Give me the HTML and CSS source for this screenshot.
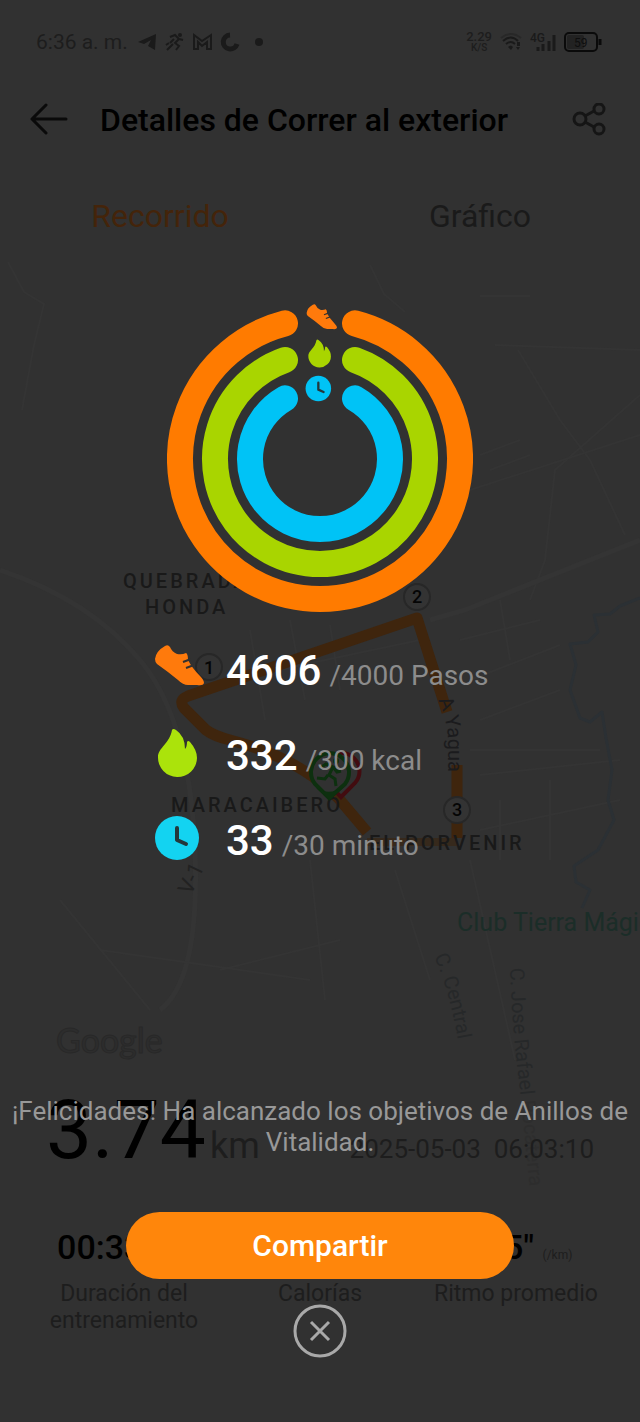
FILE: index.html
```html
<!DOCTYPE html>
<html lang="es">
<head>
    <meta charset="UTF-8">
    <meta name="viewport" content="width=device-width, initial-scale=1.0">
    <title>Detalles de Correr al exterior</title>
    <link rel="stylesheet" href="styles.css">
</head>
<body>
    <div class="screen">
        <!-- Status bar -->
        <div class="status-bar">
            <span class="status-time">6:36 a. m.</span>
            <svg class="status-apps" width="130" height="22" viewBox="0 0 130 22">
                <path class="fill" d="M2 11 L20 3 L19 19 L12 15 L15 9 L8 13 Z"/>
                <g class="line">
                    <circle cx="44" cy="4" r="1"/>
                    <path d="M34 6 L39 4 L43 8 L39 12 L43 15 L40 19 M43 8 L47 9 M38 8 L34 12 M37 13 L31 19 M33 12 L30 14"/>
                    <path d="M58 18 V4 L66 10 L75 4 V18 H71 V11 L66 15 L62 11 V18 Z"/>
                </g>
                <path class="thick" d="M94 4 A7 7 0 1 0 101 13"/>
                <circle class="fill" cx="123" cy="11" r="4"/>
            </svg>
            <div class="status-right">
                <span class="net-speed"><b>2.29</b><small>K/S</small></span>
                <svg width="22" height="20" viewBox="0 0 22 20">
                    <path class="line faint" d="M1 6 Q11 -2 21 6"/>
                    <path class="line" d="M3 9 Q11 2 18 9 M6 12 Q11 8 15 12"/>
                    <path class="fill" d="M8 15 Q11 12 13 15 L11 18 Z M17 10 h3 v4 h-3 Z M16 15 h4 l-2 3 Z"/>
                </svg>
                <svg width="26" height="22" viewBox="0 0 26 22">
                    <text class="net-type" x="0" y="11">4G</text>
                    <path class="bars" d="M8 20 V16 M13 20 V13 M19 20 V10 M24 20 V4"/>
                </svg>
                <svg width="38" height="20" viewBox="0 0 38 20">
                    <rect class="battery" x="1" y="1" width="32" height="18" rx="4"/>
                    <rect class="battery-level" x="3" y="3" width="17" height="14" rx="2"/>
                    <path class="battery-cap" d="M36 7 V13"/>
                    <text class="battery-text" x="10" y="15">59</text>
                </svg>
            </div>
        </div>

        <!-- Header -->
        <div class="header">
            <button class="icon-button" aria-label="Atrás">
                <svg width="38" height="34" viewBox="0 0 38 34">
                    <path class="back" d="M36 16 H2 M16 2 L2 16 L16 30"/>
                </svg>
            </button>
            <h1 class="title">Detalles de Correr al exterior</h1>
            <button class="icon-button" aria-label="Compartir ruta">
                <svg width="34" height="34" viewBox="0 0 34 34">
                    <g class="share">
                        <circle cx="8" cy="16" r="6"/>
                        <circle cx="27" cy="6" r="5"/>
                        <circle cx="27" cy="26" r="5"/>
                        <path d="M13 13 L22 8 M13 19 L22 24"/>
                    </g>
                </svg>
            </button>
        </div>
        <div class="tabs">
            <button class="tab active">Recorrido</button>
            <button class="tab">Gráfico</button>
        </div>

        <!-- Route map -->
        <svg class="map" viewBox="0 262 640 814">
            <rect class="map-bg" x="0" y="262" width="640" height="814"/>
            <g class="roads">
                <path d="M8 262 L24 292 L44 304 L34 345 L22 410"/>
                <path d="M370 265 L384 294 L405 312 M480 296 H530 M495 345 L640 350"/>
                <path d="M518 350 L560 420 L590 460 L625 535 M640 395 L555 470 L545 560 L530 600"/>
                <path d="M470 490 L640 435 M480 455 L520 440 M490 470 L530 455"/>
                <path d="M430 620 L465 610 L640 540" class="wide"/>
                <path d="M0 570 Q90 600 140 660 T195 850 T160 1010" class="wide"/>
                <path d="M250 630 L265 720 M290 620 L305 700 M330 625 L340 690 M230 680 L420 640"/>
                <path d="M460 640 L540 620 M470 680 L560 645 M480 720 L560 690 M470 750 H600 M480 775 L620 760 M500 600 L510 660"/>
                <path d="M480 830 L620 800 M395 870 L430 980 M470 860 L515 1060 M500 800 V860 M550 780 V860"/>
                <path d="M60 900 L150 1010 M100 950 L310 980 M220 970 L340 940 M310 860 L325 1000"/>
            </g>
            <path class="river" d="M640 598 L620 606 L610 614 L594 615 L598 632 L588 642 L570 644 L576 665 L570 690 L580 718 L590 722 L602 712 L606 738 L612 770 L608 800 L614 820 L598 850 L574 866 L576 882 L590 890 L582 908"/>

            <path class="route" d="M457 838 V765 M447 712 L432 665 L417 618 L188 696 Q178 700 184 708 L206 730 Q214 736 230 740 Q300 758 340 800 L367 832"/>
            <path class="route end" d="M367 842 H457"/>

            <g class="place">
                <text x="123" y="588">QUEBRADA</text>
                <text x="145" y="614">HONDA</text>
                <text x="171" y="812">MARACAIBERO</text>
                <text x="369" y="850">EL PORVENIR</text>
            </g>
            <text class="club" x="457" y="931">Club Tierra Mágica</text>

            <g class="street">
                <path id="yagua" d="M438 700 Q448 720 448 745 V785"/>
                <path id="central" d="M434 957 Q448 985 458 1040"/>
                <path id="rafael" d="M510 968 Q512 1030 520 1090 L530 1190"/>
                <text class="dark"><textPath href="#yagua">A Yagua</textPath></text>
                <text><textPath href="#central">C. Central</textPath></text>
                <text><textPath href="#rafael">C. Jose Rafael <tspan class="fade">Pocaterra</tspan></textPath></text>
                <text class="road-number" transform="translate(191 896) rotate(-65)">V-1</text>
            </g>

            <g class="marker">
                <circle cx="209" cy="667" r="13"/>
                <circle cx="417" cy="597" r="13"/>
                <circle cx="457" cy="810" r="13"/>
                <text x="209" y="674">1</text>
                <text x="417" y="603">2</text>
                <text x="457" y="816">3</text>
            </g>

            <path class="pin red" d="M341 797 L355 783 A18 18 0 1 0 328 783 Z"/>
            <path class="pin green" d="M329 798 L345 784 A19 19 0 1 0 315 784 Z"/>
            <path class="pin-tip" d="M316 788 Q329 796 344 787 L330 800 Z"/>
            <path class="runner" d="M320 768 L326 764 L333 767 L329 775 L335 779 L336 786 M333 767 L337 772 L341 771 M328 775 L325 779 L317 778"/>
            <circle class="runner-head" cx="336" cy="761" r="3"/>

            <text class="google" x="56" y="1053">Google</text>
        </svg>

        <!-- Workout summary -->
        <div class="summary">
            <div class="distance"><span class="distance-value">3.74</span><span class="unit">km</span></div>
            <div class="date">2025-05-03&nbsp; 06:03:10</div>
        </div>
        <div class="stats">
            <div class="stat">
                <div class="stat-value">00:33:21</div>
                <div class="stat-label">Duración del entrenamiento</div>
            </div>
            <div class="stat">
                <div class="stat-value">332</div>
                <div class="stat-label">Calorías</div>
            </div>
            <div class="stat">
                <div class="stat-value">8'55" <small>(/km)</small></div>
                <div class="stat-label">Ritmo promedio</div>
            </div>
        </div>

        <!-- Goal popup -->
        <div class="overlay">
            <svg class="rings" width="306" height="310" viewBox="0 -4 306 310">
                <path class="ring steps" d="M188 17.4 A140 140 0 1 1 118 17.4"/>
                <path class="ring calories" d="M188 54 A105 105 0 1 1 118 54"/>
                <path class="ring minutes" d="M188 92.4 A70 70 0 1 1 118 92.4"/>
                <svg class="ring-steps" x="139" y="-3" width="31" height="31" viewBox="0 0 50 50"><use href="#shoe"/></svg>
                <svg class="ring-calories" x="139" y="33" width="29" height="29" viewBox="0 0 50 50"><use href="#flame"/></svg>
                <svg class="ring-minutes" x="138" y="68" width="29" height="29" viewBox="0 0 50 50"><use href="#clock"/></svg>
            </svg>
            <ul class="goals">
                <li class="goal">
                    <svg class="icon-steps" width="50" height="50" viewBox="0 0 50 50">
                        <g id="shoe">
                            <path fill="currentColor" d="M1 16 Q2 8 11 3 Q14 1 16 4 Q18 9 23 11 Q28 12 32 10 Q34 11 34 17 Q38 25 46 33 Q50 37 50 40 Q49 43 43 42 H34 Q29 42 24 37 Q13 28 3 21 Q1 19 1 16 Z"/>
                            <path class="lace" d="M37 16 L29 19 M40 22 L32 25"/>
                        </g>
                    </svg>
                    <strong>4606</strong> <span>/4000 Pasos</span>
                </li>
                <li class="goal">
                    <svg class="icon-calories" width="50" height="50" viewBox="0 0 50 50">
                        <g id="flame">
                            <path fill="currentColor" d="M18 2 Q19 0 22 2 Q31 8 31 21 Q33 19 33 14 Q34 12 36 14 Q43 22 43 30 A19 19 0 0 1 4 29 C4 20 16 15 18 2 Z"/>
                        </g>
                    </svg>
                    <strong>332</strong> <span>/300 kcal</span>
                </li>
                <li class="goal">
                    <svg class="icon-minutes" width="50" height="50" viewBox="0 0 50 50">
                        <g id="clock">
                            <circle cx="23" cy="25" r="22" fill="currentColor"/>
                            <path class="hands" d="M23 15 V27 L32 31"/>
                        </g>
                    </svg>
                    <strong>33</strong> <span>/30 minuto</span>
                </li>
            </ul>
            <p class="message">¡Felicidades! Ha alcanzado los objetivos de Anillos de Vitalidad.</p>
            <button class="share-button">Compartir</button>
            <button class="close-button" aria-label="Cerrar">
                <svg width="54" height="54" viewBox="0 0 54 54">
                    <circle cx="27" cy="27" r="25"/>
                    <path d="M18 18 L36 36 M36 18 L18 36"/>
                </svg>
            </button>
        </div>
    </div>
</body>
</html>
```
FILE: styles.css
```css
* {
    box-sizing: border-box;
}
body {
    font-family: Roboto, "Liberation Sans", sans-serif;
    background-color: #313131;
    color: #1d1d1d;
    margin: 0;
}
button {
    font-family: inherit;
    background: none;
    border: none;
    padding: 0;
    cursor: pointer;
}
svg {
    display: block;
}
.screen {
    position: relative;
    min-height: 100vh;
    overflow: hidden;
}

/* Status bar */
.status-bar {
    display: flex;
    align-items: center;
    height: 84px;
    padding: 0 38px 0 36px;
    font-size: 21px;
}
.status-apps {
    margin-left: 8px;
}
.status-bar .fill {
    fill: #1a1a1a;
}
.status-bar .line {
    fill: none;
    stroke: #1a1a1a;
    stroke-width: 2;
}
.status-bar .faint {
    stroke: #282828;
}
.status-bar .thick {
    fill: none;
    stroke: #1a1a1a;
    stroke-width: 5;
}
.status-right {
    display: flex;
    align-items: center;
    gap: 8px;
    margin-left: auto;
}
.net-speed {
    display: flex;
    flex-direction: column;
    align-items: center;
    line-height: 11px;
}
.net-speed b {
    font-size: 13px;
    font-weight: 500;
}
.net-speed small {
    font-size: 10px;
    font-weight: 500;
}
.net-type {
    font-size: 12px;
    font-weight: 500;
    fill: #1a1a1a;
}
.bars {
    fill: none;
    stroke: #1a1a1a;
    stroke-width: 3;
}
.battery {
    fill: none;
    stroke: #0a0a0a;
    stroke-width: 2;
}
.battery-level {
    fill: #222;
}
.battery-cap {
    stroke: #0a0a0a;
    stroke-width: 3;
}
.battery-text {
    font-size: 12px;
    fill: #0e0e0e;
}

/* Header */
.header {
    display: flex;
    align-items: center;
    height: 72px;
    padding: 0 34px 0 30px;
}
.title {
    flex: 1;
    margin: 0 0 0 32px;
    font-size: 32px;
    font-weight: 500;
    color: #000;
}
.back {
    fill: none;
    stroke: #0a0a0a;
    stroke-width: 3;
    stroke-linecap: round;
    stroke-linejoin: round;
}
.share {
    fill: none;
    stroke: #151515;
    stroke-width: 3;
}
.tabs {
    display: flex;
    padding: 42px 0 28px;
}
.tab {
    flex: 1;
    font-size: 32px;
    line-height: 36px;
    color: #1a1a1a;
}
.tab.active {
    color: #44240a;
}

/* Map */
.map {
    width: 100%;
    height: auto;
    overflow: visible;
}
.map-bg {
    fill: #313131;
}
.roads path {
    fill: none;
    stroke: #343434;
    stroke-width: 2;
}
.roads .wide {
    stroke-width: 5;
}
.river {
    fill: none;
    stroke: #2b3034;
    stroke-width: 3;
    stroke-linejoin: round;
}
.route {
    fill: none;
    stroke: #3f250d;
    stroke-width: 11;
    stroke-linejoin: round;
}
.route.end {
    stroke: #36291c;
    stroke-width: 8;
}
.place text {
    font-size: 20px;
    font-weight: 500;
    letter-spacing: 3px;
    fill: #191919;
}
.club {
    font-size: 25px;
    fill: #1b2d28;
}
.street text {
    font-size: 20px;
    fill: #262829;
}
.street .dark {
    fill: #1b1b1d;
}
.street .road-number {
    font-size: 22px;
    fill: #222;
}
.street .fade {
    fill: #2d2d2d;
}
.street path {
    fill: none;
}
.marker circle {
    fill: #333;
    stroke: #272727;
    stroke-width: 2;
}
.marker text {
    font-size: 18px;
    font-weight: 500;
    text-anchor: middle;
    fill: #050505;
}
.pin {
    fill: #313131;
    stroke-width: 4;
}
.pin.red {
    stroke: #420c10;
}
.pin.green {
    stroke: #0d300f;
}
.pin-tip,
.runner-head {
    fill: #0d300f;
}
.runner {
    fill: none;
    stroke: #0d300f;
    stroke-width: 3;
}
.google {
    font-family: Lato, sans-serif;
    font-size: 34px;
    fill: #2d2d2d;
    stroke: #282828;
    stroke-width: 1;
}

/* Summary */
.summary {
    display: flex;
    justify-content: space-between;
    align-items: baseline;
    height: 96px;
    padding: 12px 46px 0;
}
.distance {
    font-size: 36px;
    line-height: 84px;
}
.distance-value {
    font-size: 82px;
    color: #000;
}
.unit {
    margin-left: 4px;
}
.date {
    font-size: 26px;
}
.stats {
    display: grid;
    grid-template-columns: repeat(3, 1fr);
    padding: 53px 26px 0;
    text-align: center;
}
.stat-value {
    height: 44px;
    font-size: 34px;
    font-weight: 500;
    line-height: 44px;
    color: #000;
}
.stat-value small {
    font-size: 12px;
    font-weight: 400;
    color: #1d1d1d;
}
.stat-label {
    margin-top: 11px;
    font-size: 23px;
    line-height: 27px;
}

/* Goal popup */
.overlay {
    position: absolute;
    top: 0;
    left: 0;
    width: 100%;
    height: 100%;
    display: flex;
    flex-direction: column;
    align-items: center;
    padding-top: 302px;
}
.ring {
    fill: none;
    stroke-width: 26;
    stroke-linecap: round;
}
.steps {
    stroke: #ff7b00;
}
.calories {
    stroke: #a9d500;
}
.minutes {
    stroke: #00c3f6;
}
.ring-steps,
.icon-steps {
    color: #ff7a0c;
}
.ring-calories {
    color: #a9d500;
}
.icon-calories {
    color: #abe30b;
}
.ring-minutes {
    color: #00c3f6;
}
.icon-minutes {
    color: #13d3f1;
}
.lace {
    fill: none;
    stroke: #313131;
    stroke-width: 2;
}
.hands {
    fill: none;
    stroke: #23383c;
    stroke-width: 4;
    stroke-linecap: round;
    stroke-linejoin: round;
}
.goals {
    list-style: none;
    width: 332px;
    margin: 16px 0 0;
    padding: 0;
}
.goal {
    display: flex;
    align-items: baseline;
    gap: 8px;
    height: 85px;
    line-height: 85px;
    font-size: 28px;
    color: #8c8c8c;
    white-space: nowrap;
}
.goal svg {
    flex-shrink: 0;
    align-self: center;
    margin: 0 14px 6px 0;
}
.goal strong {
    font-size: 42px;
    font-weight: 500;
    color: #fff;
}
.message {
    margin: 213px 0 54px;
    font-size: 26px;
    line-height: 31px;
    text-align: center;
    color: #989898;
}
.share-button {
    width: 388px;
    max-width: 90%;
    height: 67px;
    border-radius: 34px;
    background-color: #ff860b;
    color: #fff;
    font-size: 30px;
    font-weight: 500;
}
.close-button {
    margin-top: 25px;
}
.close-button svg {
    fill: none;
    stroke: #a9a9a9;
    stroke-width: 3;
}
```
